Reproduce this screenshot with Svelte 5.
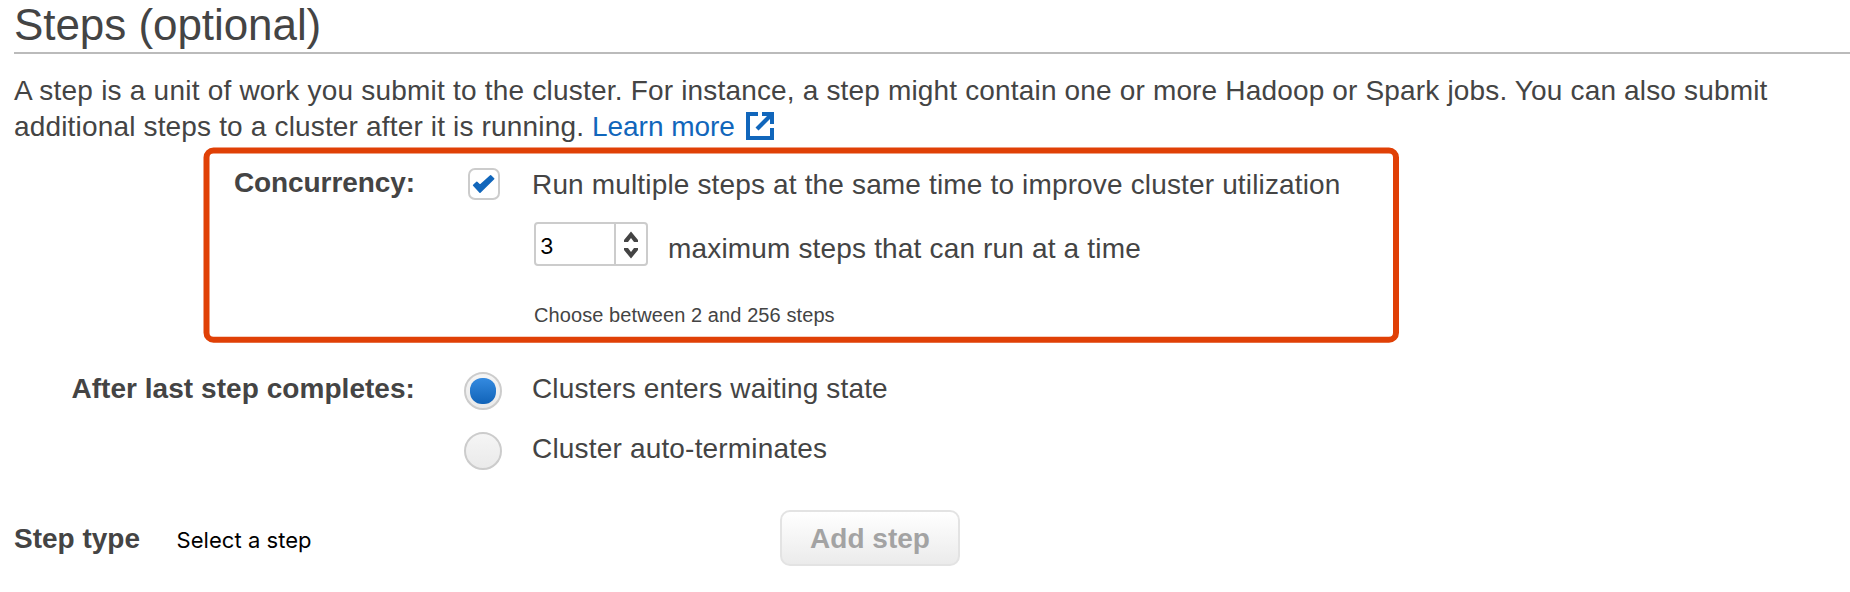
<script>
  let concurrent = $state(true);
  let maxSteps = $state(3);
  let after = $state('wait');
</script>

<main>
  <h1>Steps (optional)</h1>
  <p class="intro">
    <span class="first">A step is a unit of work you submit to the cluster.</span>
    <span class="rest">For instance, a step might contain one or more Hadoop or Spark jobs. You can also submit</span><br />
    <span class="second">additional steps to a cluster after it is running.</span>
    <a href="#learn">Learn more<svg class="ext" viewBox="0 0 28 28" width="28" height="28" aria-hidden="true">
      <path d="M12 2H2V26H26V16" fill="none" stroke="currentColor" stroke-width="4" />
      <path d="M16 0H28V12H24V7L12.5 18.500L9.500 15.500L21 4H16Z" fill="currentColor" />
    </svg></a>
  </p>

  <section class="concurrency">
    <svg class="outline" width="1197" height="197" aria-hidden="true">
      <rect x="3.500" y="3.500" width="1189.500" height="189.300" rx="7" fill="none" stroke="#e04006" stroke-width="6" />
    </svg>
    <div class="label tight">Concurrency:</div>
    <div class="fields">
      <div class="choice">
        <button class="check" role="checkbox" aria-checked={concurrent} aria-label="Run multiple steps" onclick={() => (concurrent = !concurrent)}>
          {#if concurrent}
            <svg viewBox="0 0 32 32" width="32" height="32"><path d="M5.600 17.200L8.800 14.300L12 17.400L22.600 7.700L25.700 10.800L12 24.300Z" fill="#1166bb" stroke="#1166bb" stroke-width="1.500" stroke-linejoin="round" /></svg>
          {/if}
        </button>
        <span>Run multiple steps at the same time to improve cluster utilization</span>
      </div>
      <div class="amount">
        <div class="spinner">
          <span class="value">{maxSteps}</span>
          <button class="arrows" aria-label="Increase" onclick={() => (maxSteps += 1)}>
            <svg viewBox="0 0 14 28" width="14" height="28"><path d="M7 0.500L14 9V11H10L7 7L4 11H0V9ZM7 27.500L14 19V17H10L7 21L4 17H0V19Z" fill="#444" /></svg>
          </button>
        </div>
        <span class="caption">maximum steps that can run at a time</span>
      </div>
      <div class="hint">Choose between 2 and 256 steps</div>
    </div>
  </section>

  <section class="after">
    <div class="label">After last step completes:</div>
    <div class="radios">
      <div class="option">
        <button class="radio" class:on={after === 'wait'} role="radio" aria-checked={after === 'wait'} aria-label="Wait" onclick={() => (after = 'wait')}></button>
        <span>Clusters enters waiting state</span>
      </div>
      <div class="option">
        <button class="radio" class:on={after === 'stop'} role="radio" aria-checked={after === 'stop'} aria-label="Terminate" onclick={() => (after = 'stop')}></button>
        <span class="wide">Cluster auto-terminates</span>
      </div>
    </div>
  </section>

  <section class="add">
    <strong>Step type</strong>
    <span class="select">Select a step</span>
    <button class="submit" disabled>Add step</button>
  </section>
</main>

<style>
  :global(body) { background: #fff; }
  main {
    box-sizing: border-box;
    height: 592px;
    padding-left: 14px;
    overflow: hidden;
    color: #444;
    font: 28px/36px "Liberation Sans", Arial, sans-serif;
    letter-spacing: 0.155px;
    white-space: nowrap;
  }
  button { padding: 0; margin: 0; font: inherit; color: inherit; background: none; box-sizing: border-box; }
  h1 {
    box-sizing: border-box;
    height: 54px;
    margin: 0;
    border-bottom: 2px solid #bbb;
    font-size: 44px;
    line-height: 50px;
    font-weight: 400;
    letter-spacing: -0.06px;
  }
  .intro { margin: 19px 0 0; height: 71px; }
  .first { letter-spacing: 0.22px; }
  .rest { letter-spacing: 0.165px; }
  .second { letter-spacing: 0.165px; }
  a { color: #1166bb; text-decoration: none; letter-spacing: -0.05px; }
  .ext { margin-left: 11px; vertical-align: -4px; }
  section { display: flex; }
  .label { width: 401px; flex: none; text-align: right; font-weight: 700; letter-spacing: 0.05px; }
  .tight { letter-spacing: -0.08px; }
  .concurrency { position: relative; height: 196px; margin-top: 3px; }
  .concurrency .label { margin-top: 18px; }
  .outline { position: absolute; left: 189px; top: 0; pointer-events: none; }
  .fields { padding: 19px 0 0 53px; }
  .choice { display: flex; height: 36px; }
  .check { width: 32px; height: 32px; margin: 2px 32px 0 0; border: 2px solid #ccc; border-radius: 7px; background: #fff; }
  .check svg { display: block; margin: -2px; }
  .choice span { padding-top: 1px; }
  .amount { display: flex; margin: 20px 0 0 66px; height: 44px; }
  .spinner { display: flex; box-sizing: border-box; width: 114px; height: 44px; border: 2px solid #ccc; border-radius: 4px; }
  .value { width: 78px; box-sizing: border-box; padding-left: 4px; color: #000; font: 22px/44px Inter, sans-serif; }
  .arrows { display: flex; justify-content: center; align-items: center; width: 32px; height: 40px; padding-top: 2px; border: 0; border-left: 2px solid #ccc; }
  .caption { margin: 9px 0 0 20px; letter-spacing: 0.167px; }
  .hint { margin: 36px 0 0 66px; font-size: 20px; line-height: 26px; letter-spacing: 0.09px; }
  .after { margin-top: 27px; height: 102px; }
  .after .label { margin-top: 1px; }
  .radios { display: grid; grid-template-rows: 60px 42px; padding-left: 49px; }
  .option { display: flex; letter-spacing: 0.14px; }
  .option span { margin-top: 1px; }
  .option .wide { letter-spacing: 0.18px; }
  .radio { position: relative; width: 38px; height: 38px; margin: 2px 30px 0 0; border: 2px solid #ccc; border-radius: 50%; background: linear-gradient(#f5f5f5, #eaeaea); }
  .radio.on::after { content: ""; position: absolute; inset: 4px; border-radius: 12px; background: linear-gradient(#348ae0, #1163b8); }
  .add { margin-top: 38px; height: 56px; letter-spacing: 0; }
  .add strong { width: 162.500px; margin-top: 11px; }
  .select { width: 603.500px; margin-top: 12px; color: #000; font: 22px/36px Inter, sans-serif; letter-spacing: 0.05px; }
  .submit { width: 180px; height: 56px; padding-top: 2px; border: 2px solid #e3e3e3; border-radius: 10px; color: #a3a3a3; font-weight: 700; letter-spacing: 0; background: linear-gradient(#fff, #ebebeb); }
</style>
